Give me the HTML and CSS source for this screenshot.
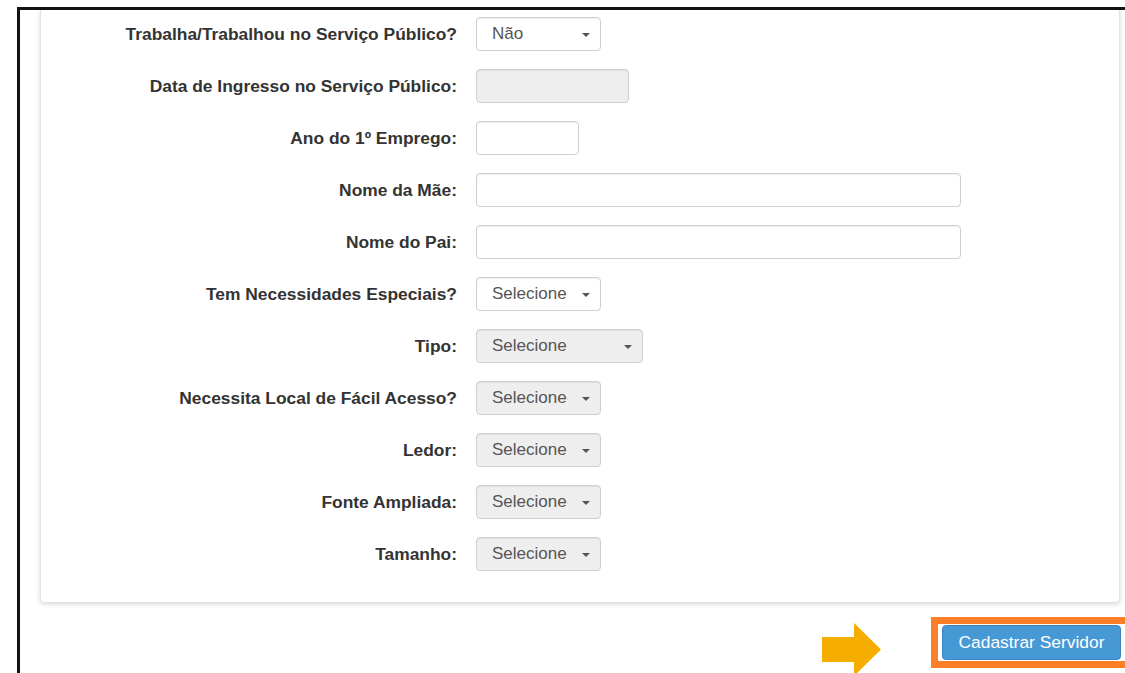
FILE: index.html
```html
<!DOCTYPE html>
<html lang="pt-BR">
<head>
<meta charset="utf-8">
<title>Cadastro de Servidor</title>
<link rel="stylesheet" href="styles.css">
</head>
<body>
<div class="frame">
  <section class="card">
    <form class="form">
      <label class="lbl">Trabalha/Trabalhou no Serviço Público?</label>
      <div class="ctl"><div class="select w125"><span>Não</span><i class="caret"></i></div></div>

      <label class="lbl">Data de Ingresso no Serviço Público:</label>
      <div class="ctl"><div class="input w153 disabled"></div></div>

      <label class="lbl">Ano do 1º Emprego:</label>
      <div class="ctl"><div class="input w103"></div></div>

      <label class="lbl">Nome da Mãe:</label>
      <div class="ctl"><div class="input w485"></div></div>

      <label class="lbl">Nome do Pai:</label>
      <div class="ctl"><div class="input w485"></div></div>

      <label class="lbl">Tem Necessidades Especiais?</label>
      <div class="ctl"><div class="select w125"><span>Selecione</span><i class="caret"></i></div></div>

      <label class="lbl">Tipo:</label>
      <div class="ctl"><div class="select w167 disabled"><span>Selecione</span><i class="caret"></i></div></div>

      <label class="lbl">Necessita Local de Fácil Acesso?</label>
      <div class="ctl"><div class="select w125 disabled"><span>Selecione</span><i class="caret"></i></div></div>

      <label class="lbl">Ledor:</label>
      <div class="ctl"><div class="select w125 disabled"><span>Selecione</span><i class="caret"></i></div></div>

      <label class="lbl">Fonte Ampliada:</label>
      <div class="ctl"><div class="select w125 disabled"><span>Selecione</span><i class="caret"></i></div></div>

      <label class="lbl">Tamanho:</label>
      <div class="ctl"><div class="select w125 disabled"><span>Selecione</span><i class="caret"></i></div></div>
    </form>
  </section>

  <div class="footer">
    <svg class="arrow" width="60" height="54" viewBox="0 0 60 54" aria-hidden="true">
      <polygon points="0,14 32,14 32,0 59,26.5 32,53 32,39 0,39" fill="#f5ad00"/>
    </svg>
    <div class="highlight">
      <button type="button" class="btn">Cadastrar Servidor</button>
    </div>
  </div>
</div>
</body>
</html>
```

FILE: styles.css
```css
html, body {
  margin: 0;
  padding: 0;
  background: #fff;
}

body {
  width: 1125px;
  height: 673px;
  overflow: hidden;
  font-family: "Liberation Sans", Arial, Helvetica, sans-serif;
}

/* black outline around the captured region */
.frame {
  margin: 7px 0 0 17px;
  height: 663px;
  border-top: 3px solid #141414;
  border-left: 3px solid #141414;
}

.card {
  margin-left: 20px;
  width: 1078px;
  background: #fff;
  border: 1px solid #e2e2e2;
  border-top: none;
  border-radius: 0 0 4px 4px;
  box-shadow: 0 1px 5px rgba(0, 0, 0, 0.16);
  padding: 7px 0 31px;
}

.form {
  display: grid;
  grid-template-columns: 416px 1fr;
  column-gap: 19px;
  row-gap: 18px;
  align-items: center;
}

.lbl {
  text-align: right;
  font-weight: bold;
  font-size: 17.4px;
  color: #333;
  line-height: 20px;
}

.ctl {
  display: flex;
}

.input,
.select {
  box-sizing: border-box;
  height: 34px;
  border: 1px solid #cfcfcf;
  border-radius: 4px;
  background: #fff;
  box-shadow: inset 0 1px 1px rgba(0, 0, 0, 0.06);
}

.select {
  display: flex;
  align-items: center;
  justify-content: space-between;
  padding: 0 10px 0 15px;
  font-size: 17px;
  color: #555;
}

.disabled {
  background: #eee;
}

.caret {
  width: 0;
  height: 0;
  border-top: 4px solid #555;
  border-left: 4px solid transparent;
  border-right: 4px solid transparent;
  margin-top: 1px;
}

.w103 { width: 103px; }
.w125 { width: 125px; }
.w153 { width: 153px; }
.w167 { width: 167px; }
.w485 { width: 485px; }

.footer {
  display: flex;
  justify-content: flex-end;
  align-items: flex-start;
  gap: 49px;
  margin-top: 14px;
  margin-right: -7px;
}

.arrow {
  display: block;
  margin-top: 6px;
}

.highlight {
  border: 7px solid #fc7e26;
  padding: 1px 4px;
  background: #fff;
}

.btn {
  display: block;
  box-sizing: border-box;
  width: 179px;
  height: 35px;
  padding: 0;
  border: 1px solid #3a83c0;
  border-radius: 4px;
  background: #4799d6;
  color: #fff;
  font-family: "Liberation Sans", Arial, Helvetica, sans-serif;
  font-size: 17.4px;
}
```
